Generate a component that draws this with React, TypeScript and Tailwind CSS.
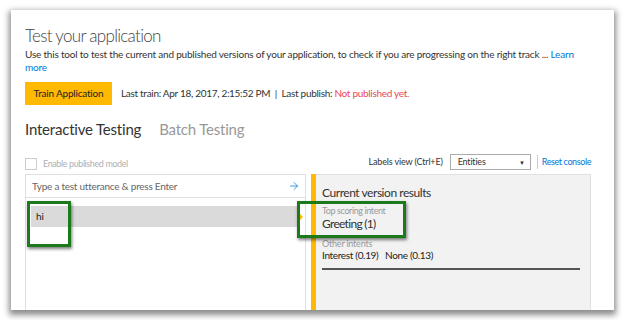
import { ArrowRight } from "lucide-react";

const App = () => {
  return (
    <div className="w-[628px] h-[320px] overflow-hidden bg-white font-['Lato',sans-serif] text-[#333]">
      <div className="relative ml-[11px] mt-[10px] flex h-[300px] w-[603px] flex-col bg-white pl-[14px] pr-[23px] shadow-[0_3px_6px_2px_rgba(0,0,0,0.45)]">
        <h1 className="mt-[14px] text-[17px] font-light leading-[24px] tracking-[-0.7px] text-[#444]">
          Test your application
        </h1>
        <p className="w-[553px] text-[10px] leading-[13px] tracking-[-0.2px] text-[#333]">
          Use this tool to test the current and published versions of your application, to check if you are
          progressing on the right track ... <span className="text-[#0078d7]">Learn</span>{" "}
          <span className="text-[#0078d7]">more</span>
        </p>
        <div className="mt-[8px] flex items-center">
          <button className="h-[23px] w-[87px] bg-[#ffb900] text-[10px] tracking-[-0.2px] text-[#222]">
            Train Application
          </button>
          <span className="ml-[9px] text-[10px] tracking-[-0.3px] text-[#333]">
            Last train: Apr 18, 2017, 2:15:52 PM&nbsp; |&nbsp; Last publish:{" "}
            <span className="text-[#e74856]">Not published yet.</span>
          </span>
        </div>
        <div className="mt-[14px] flex gap-[18px] text-[15px] leading-[20px] tracking-[-0.2px]">
          <span className="text-[#333]">Interactive Testing</span>
          <span className="text-[#999]">Batch Testing</span>
        </div>
        <div className="mt-[15px] flex h-[16px] items-center">
          <span className="mt-[3px] h-[12px] w-[12px] border border-[#ccc] bg-white" />
          <span className="ml-[6px] mt-[3px] text-[9px] tracking-[-0.4px] text-[#b0b0b0]">Enable published model</span>
          <span className="ml-auto text-[9px] tracking-[-0.15px] text-[#333]">Labels view (Ctrl+E)</span>
          <div className="ml-[7px] flex h-[16px] w-[81px] items-center justify-between border border-[#aaa] bg-white pl-[7px] pr-[5px] text-[9px] tracking-[-0.2px] text-[#333]">
            <span>Entities</span>
            <span className="text-[6px]">▼</span>
          </div>
          <span className="ml-[6px] h-[14px] w-px bg-[#ccc]" />
          <span className="ml-[4px] text-[9px] tracking-[-0.4px] text-[#0078d7]">Reset console</span>
        </div>
        <div className="mt-[4px] flex flex-1">
          <div className="flex w-[281px] flex-col border border-b-0 border-[#e0e0e0]">
            <div className="flex h-[23px] items-center justify-between border-b border-[#e0e0e0] pl-[6px] pr-[5px]">
              <span className="text-[10px] tracking-[-0.25px] text-[#666]">Type a test utterance &amp; press Enter</span>
              <ArrowRight className="h-[12px] w-[12px] text-[#0078d7]" strokeWidth={1.5} />
            </div>
            <div className="mt-[8px] flex items-center">
              <div className="ml-[5px] flex h-[21px] w-[268px] items-center bg-[#dadada] pl-[5px] text-[10px] text-[#222]">
                hi
              </div>
              <span className="ml-[1px] h-0 w-0 border-y-[3px] border-l-[3px] border-y-transparent border-l-[#ffb900]" />
            </div>
          </div>
          <div className="ml-[5px] w-[5px] bg-[#ffb900]" />
          <div className="flex flex-1 flex-col border border-b-0 border-l-0 border-[#e0e0e0] bg-[#f2f2f2] pl-[6px] pr-[10px]">
            <div className="mt-[9px] text-[12px] leading-[18px] tracking-[-0.45px] text-[#333]">Current version results</div>
            <div className="mt-[3px] text-[9px] leading-[11px] tracking-[-0.4px] text-[#999]">Top scoring intent</div>
            <div className="text-[12px] leading-[16px] tracking-[-0.7px] text-[#333]">Greeting (1)</div>
            <div className="mt-[6px] text-[9px] leading-[11px] tracking-[-0.2px] text-[#999]">Other intents</div>
            <div className="text-[10px] leading-[13px] tracking-[-0.33px] text-[#222]">
              Interest (0.19)&nbsp;&nbsp; None (0.13)
            </div>
            <div className="mt-[6px] h-[1.5px] bg-[#555]" />
          </div>
        </div>
        <div className="absolute left-[16px] top-[191px] h-[46px] w-[44px] border-[3px] border-[#1c7a1c] shadow-[1px_2px_3px_rgba(0,0,0,0.5)]" />
        <div className="absolute left-[286px] top-[191px] h-[37px] w-[109px] border-[3px] border-[#1c7a1c] shadow-[1px_2px_3px_rgba(0,0,0,0.5)]" />
      </div>
    </div>
  );
};

export default App;
